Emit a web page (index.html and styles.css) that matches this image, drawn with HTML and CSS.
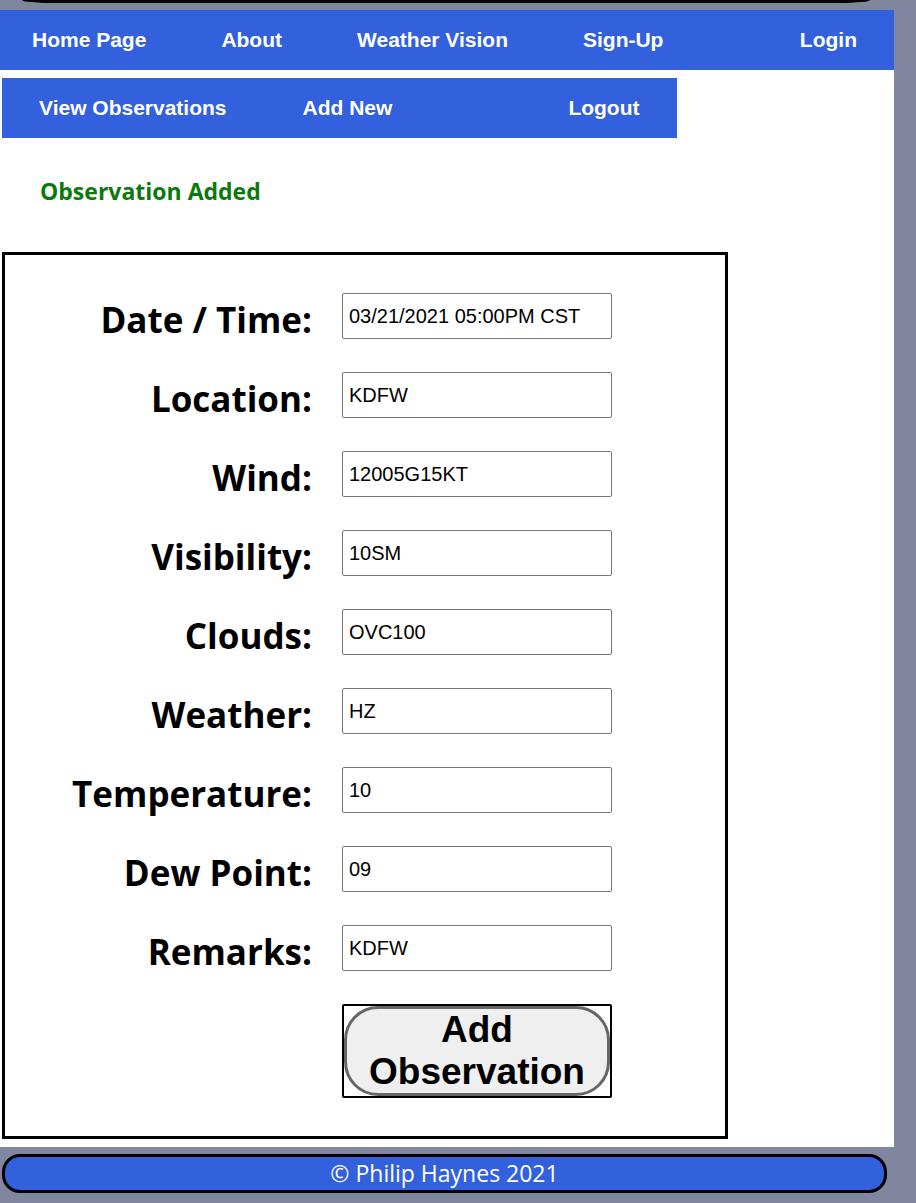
FILE: index.html
```html
<!DOCTYPE html>
<html lang="en">
<head>
<meta charset="utf-8">
<title>Weather Vision - Add Observation</title>
<link rel="stylesheet" href="styles.css">
</head>
<body>
<div class="top-cap"></div>
<div class="page">
  <nav class="nav-main">
    <a href="#">Home Page</a>
    <a href="#">About</a>
    <a href="#">Weather Vision</a>
    <a href="#">Sign-Up</a>
    <a href="#" class="login">Login</a>
  </nav>
  <nav class="nav-sub">
    <a href="#">View Observations</a>
    <a href="#">Add New</a>
    <a href="#" class="logout">Logout</a>
  </nav>
  <p class="msg">Observation Added</p>
  <form class="obs-form">
    <label class="lbl">Date / Time:</label><input class="field" type="text" value="03/21/2021 05:00PM CST">
    <label class="lbl">Location:</label><input class="field" type="text" value="KDFW">
    <label class="lbl">Wind:</label><input class="field" type="text" value="12005G15KT">
    <label class="lbl">Visibility:</label><input class="field" type="text" value="10SM">
    <label class="lbl">Clouds:</label><input class="field" type="text" value="OVC100">
    <label class="lbl">Weather:</label><input class="field" type="text" value="HZ">
    <label class="lbl">Temperature:</label><input class="field" type="text" value="10">
    <label class="lbl">Dew Point:</label><input class="field" type="text" value="09">
    <label class="lbl">Remarks:</label><input class="field" type="text" value="KDFW">
    <span></span>
    <div class="btn-wrap"><button type="button" class="btn">Add Observation</button></div>
  </form>
</div>
<footer class="footer">© Philip Haynes 2021</footer>
</body>
</html>
```

FILE: styles.css
```css
html, body {
  margin: 0;
  padding: 0;
}
body {
  background: #80869d;
  width: 916px;
  min-height: 1203px;
}
.top-cap {
  height: 3px;
  margin: 0 46px 7px 22px;
  background: #000;
  border-radius: 0 0 60px 60px / 0 0 6px 6px;
}
.page {
  width: 894px;
  background: #fff;
  padding-bottom: 8px;
}
.nav-main, .nav-sub {
  display: flex;
  align-items: center;
  height: 60px;
  background: #3360dd;
  font-family: "Liberation Sans", Arial, sans-serif;
  font-weight: bold;
  font-size: 21px;
}
.nav-main a, .nav-sub a {
  color: #fff;
  text-decoration: none;
}
.nav-main {
  padding-left: 32px;
  gap: 75px;
}
.nav-main .login {
  margin-left: auto;
  margin-right: 37px;
}
.nav-sub {
  width: 675px;
  margin: 8px 0 0 2px;
  padding-left: 37px;
  box-sizing: border-box;
  gap: 76px;
}
.nav-sub .logout {
  margin-left: 100px;
}
.msg {
  margin: 38px 0 46px 40px;
  line-height: 30px;
  font-family: "Open Sans", Lato, sans-serif;
  font-weight: bold;
  font-size: 23px;
  color: #0b790b;
}
.obs-form {
  box-sizing: border-box;
  width: 726px;
  margin: 0 0 0 2px;
  border: 3px solid #000;
  padding: 38px 0 38px 0;
  display: grid;
  grid-template-columns: 307px 270px;
  column-gap: 30px;
  row-gap: 33px;
  align-items: center;
}
.lbl {
  box-sizing: border-box;
  height: 46px;
  padding-top: 8px;
  text-align: right;
  font-family: "Open Sans", Lato, sans-serif;
  font-weight: bold;
  font-size: 35px;
  line-height: 38px;
  white-space: nowrap;
  color: #000;
}
.field {
  box-sizing: border-box;
  width: 270px;
  height: 46px;
  margin: 0;
  border: 1px solid #767676;
  border-radius: 2px;
  padding: 0 6px;
  font-family: "Liberation Sans", Arial, sans-serif;
  font-size: 20px;
  color: #000;
  background: #fff;
}
.btn-wrap {
  box-sizing: border-box;
  width: 270px;
  height: 94px;
  border: 2px solid #000;
  border-radius: 2px;
  display: flex;
}
.btn {
  flex: 1;
  margin: 0;
  border: 3px solid #666;
  border-radius: 34px;
  background: #efefef;
  font-family: "Liberation Sans", Arial, sans-serif;
  font-weight: bold;
  font-size: 37px;
  line-height: 42px;
  color: #000;
  padding: 0;
}
.footer {
  box-sizing: border-box;
  width: 885px;
  height: 39px;
  margin: 7px 0 0 2px;
  background: #3360dd;
  border: 3px solid #000;
  border-radius: 18px;
  color: #fff;
  text-align: center;
  font-family: "Open Sans", Lato, sans-serif;
  font-size: 23px;
  line-height: 33px;
}
```
